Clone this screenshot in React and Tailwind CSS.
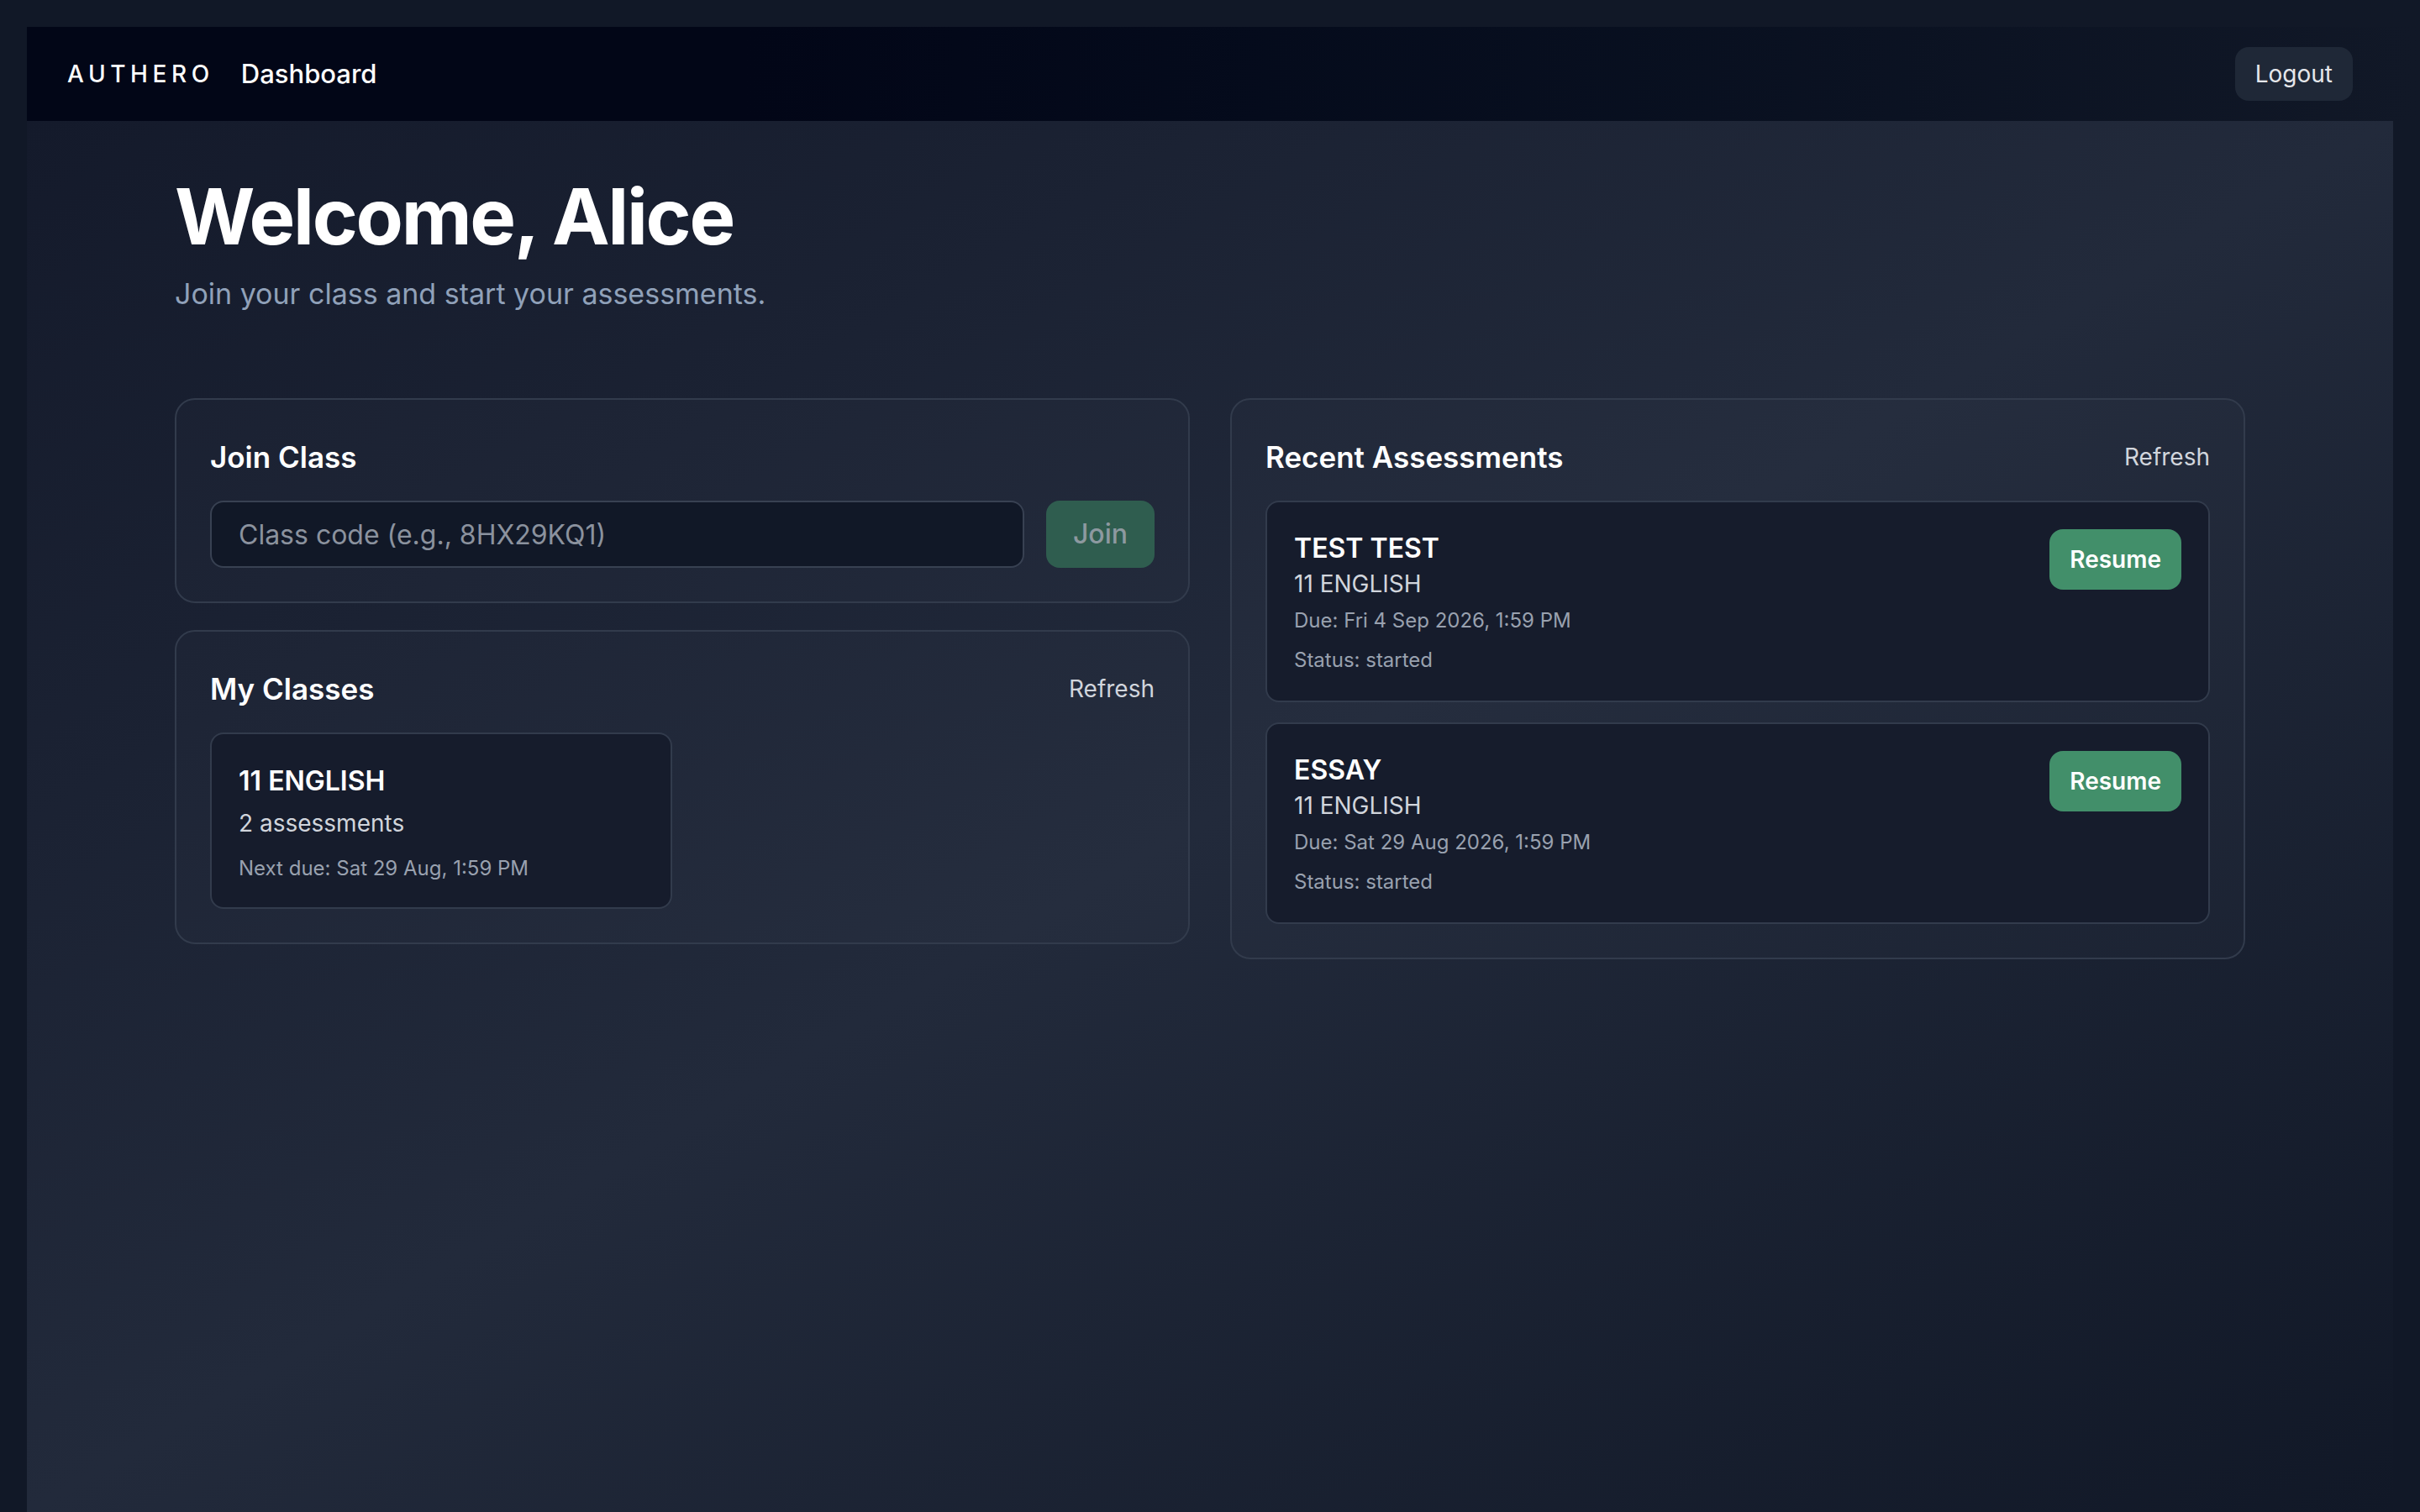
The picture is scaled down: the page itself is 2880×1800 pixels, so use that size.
import React, { useState } from 'react'

const classes = [
  { name: '11 ENGLISH', count: 2, nextDue: 'Sat 29 Aug, 1:59 PM' },
]

const assessments = [
  { title: 'TEST TEST', className: '11 ENGLISH', due: 'Fri 4 Sep 2026, 1:59 PM', status: 'started' },
  { title: 'ESSAY', className: '11 ENGLISH', due: 'Sat 29 Aug 2026, 1:59 PM', status: 'started' },
]

function Navbar() {
  return (
    <nav className="h-[112px] shrink-0 flex items-center justify-between pl-12 pr-20 bg-gradient-to-r from-[#020617] from-30% to-[#111827]">
      <div className="flex items-center gap-8">
        <span className="text-[28px] font-medium tracking-[0.2em] text-white">AUTHERO</span>
        <span className="text-[31px] font-medium text-white">Dashboard</span>
      </div>
      <button className="h-[64px] px-6 rounded-[16px] bg-[#1f2837] text-[28px] leading-[40px] text-gray-200">
        Logout
      </button>
    </nav>
  )
}

function Card({ title, action, children }) {
  return (
    <section className="rounded-[24px] border-2 border-[#323b4c] bg-white/[0.015] p-10">
      <div className="flex items-center justify-between mb-6">
        <h2 className="text-[35px] leading-[56px] font-semibold text-white">{title}</h2>
        {action && <button className="text-[28px] leading-[40px] text-gray-300">{action}</button>}
      </div>
      {children}
    </section>
  )
}

function JoinClass() {
  const [code, setCode] = useState('')
  return (
    <Card title="Join Class">
      <div className="flex gap-[26px]">
        <input
          value={code}
          onChange={e => setCode(e.target.value)}
          placeholder="Class code (e.g., 8HX29KQ1)"
          className="flex-1 h-[80px] rounded-[16px] border-2 border-[#384152] bg-[#111827] px-8 text-[32px] text-white placeholder:text-[#8b929e] outline-none"
        />
        <button
          disabled={!code}
          className="h-[80px] px-8 rounded-[16px] bg-[#2f5d4f] text-[32px] font-medium text-[#8d99a0]"
        >
          Join
        </button>
      </div>
    </Card>
  )
}

function MyClasses() {
  return (
    <Card title="My Classes" action="Refresh">
      <div className="grid grid-cols-2 gap-6">
        {classes.map(c => (
          <div key={c.name} className="rounded-[16px] border-2 border-[#323b4c] bg-[#161c2c] px-8 pt-8 pb-[30px]">
            <div className="text-[32px] leading-[48px] font-semibold text-white">{c.name}</div>
            <div className="mt-[6px] text-[28px] leading-[40px] text-gray-300">{c.count} assessments</div>
            <div className="mt-[18px] text-[24px] leading-[32px] text-gray-400">Next due: {c.nextDue}</div>
          </div>
        ))}
      </div>
    </Card>
  )
}

function RecentAssessments() {
  return (
    <Card title="Recent Assessments" action="Refresh">
      <div className="flex flex-col gap-6">
        {assessments.map(a => (
          <div
            key={a.title}
            className="flex items-start justify-between rounded-[16px] border-2 border-[#323b4c] bg-[#161c2c] p-8"
          >
            <div>
              <div className="text-[32px] leading-[45px] font-semibold text-white">{a.title}</div>
              <div className="text-[28px] leading-[40px] text-gray-300">{a.className}</div>
              <div className="mt-2 text-[24px] leading-[32px] text-gray-400">Due: {a.due}</div>
              <div className="mt-[15px] text-[24px] leading-[32px] text-gray-400">Status: {a.status}</div>
            </div>
            <button className="rounded-[16px] bg-[#428f6a] px-6 py-4 text-[28px] leading-[40px] font-semibold text-white">
              Resume
            </button>
          </div>
        ))}
      </div>
    </Card>
  )
}

export default function App() {
  return (
    <div
      className="min-h-screen flex flex-col pl-8 pt-8 bg-[#111827] antialiased"
      style={{ fontFamily: 'Inter, "Noto Sans", sans-serif' }}
    >
      <Navbar />
      <main className="flex-1 mr-8 bg-gradient-to-br from-[#141a2b] via-[#222a3b] to-[#111827]">
        <div className="max-w-[2560px] mx-auto px-12 pt-[68px] pb-16">
          <h1 className="text-[92px] leading-none font-bold tracking-tight text-white">Welcome, Alice</h1>
          <p className="mt-[18px] text-[34px] leading-[56px] text-slate-400">Join your class and start your assessments.</p>

          <div className="mt-24 grid grid-cols-2 gap-12 items-start">
            <div className="flex flex-col gap-8">
              <JoinClass />
              <MyClasses />
            </div>
            <RecentAssessments />
          </div>
        </div>
      </main>
    </div>
  )
}
